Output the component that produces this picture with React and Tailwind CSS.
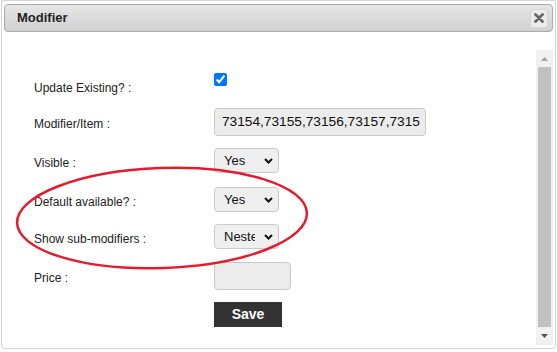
function Select({ value }) {
    return (
        <div className="w-[65px] h-[25px] border border-[#cacaca] rounded-[4px] bg-[#efefef] flex items-center pl-[9px] pr-[5px]">
            <span className="w-[31px] overflow-hidden whitespace-nowrap text-[13px] leading-[16px] text-[#111]">{value}</span>
            <svg className="ml-auto" width="9" height="6" viewBox="0 0 9 6">
                <path d="M1 1 L4.5 4.5 L8 1" fill="none" stroke="#111" strokeWidth="2" />
            </svg>
        </div>
    )
}

function Row({ label, children, className = "" }) {
    return (
        <div className={"flex items-center " + className}>
            <div className="w-[180px] pt-[4px] text-[12px] leading-[14px] text-[#222]">{label}</div>
            {children}
        </div>
    )
}

export default function App() {
    return (
        <div className="relative w-[557px] h-[352px] bg-white overflow-hidden font-['Liberation_Sans',Arial,sans-serif]">
            <div className="ml-[1px] w-[555px] h-[349px] border border-[#d4d4d4] rounded-b-[4px] p-[2px] flex flex-col">
                {/* title bar */}
                <div className="mt-[1px] h-[28px] flex items-center justify-between border border-[#aaaaaa] rounded-[4px] bg-linear-to-b from-[#e6e6e6] to-[#d1d1d1] pl-[12px] pr-[4px]">
                    <span className="text-[13px] font-bold text-[#222]">Modifier</span>
                    <div className="w-[18px] h-[19px] bg-[#ececec] border border-[#d6d6d6] rounded-[3px] flex items-center justify-center">
                        <svg width="10" height="10" viewBox="0 0 10 10">
                            <path d="M1.5 1.5 L8.5 8.5 M8.5 1.5 L1.5 8.5" stroke="#666" strokeWidth="2.8" strokeLinecap="round" />
                        </svg>
                    </div>
                </div>

                {/* body */}
                <div className="flex-1 flex pt-[18px] pb-[1px]">
                    <div className="flex-1 pl-[30px] pt-[23px] flex flex-col">
                        <div className="flex items-start h-[22px]">
                            <div className="w-[180px] pt-[8px] text-[12px] leading-[14px] text-[#222]">Update Existing? :</div>
                            <input type="checkbox" defaultChecked className="w-[13px] h-[13px] m-0" />
                        </div>
                        <Row label="Modifier/Item :" className="mt-[13px]">
                            <div className="w-[212px] h-[28px] border border-[#cacaca] rounded-[4px] bg-[#ececec] pl-[7px] flex items-center overflow-hidden whitespace-nowrap text-[13.7px] text-[#111]">
                                73154,73155,73156,73157,7315
                            </div>
                        </Row>
                        <Row label="Visible :" className="mt-[12px]">
                            <Select value="Yes" />
                        </Row>
                        <Row label="Default available? :" className="mt-[14px]">
                            <Select value="Yes" />
                        </Row>
                        <Row label="Show sub-modifiers :" className="mt-[12px]">
                            <Select value="Nested" />
                        </Row>
                        <Row label="Price :" className="mt-[13px]">
                            <div className="w-[77px] h-[28px] border border-[#cacaca] rounded-[4px] bg-[#ececec]" />
                        </Row>
                        <div className="mt-[12px] ml-[180px] w-[68px] h-[25px] bg-[#333333] text-white text-[14px] font-bold flex items-center justify-center">
                            Save
                        </div>
                    </div>

                    {/* scrollbar */}
                    <div className="w-[17px] bg-[#f1f1f1] flex flex-col">
                        <div className="h-[17px] flex items-center justify-center">
                            <svg width="7" height="4" viewBox="0 0 7 4"><path d="M0 4 L3.5 0 L7 4 Z" fill="#a3a3a3" /></svg>
                        </div>
                        <div className="h-[260px] mx-[2px] bg-[#c1c1c1]" />
                        <div className="flex-1 flex items-center justify-center">
                            <svg width="7" height="4" viewBox="0 0 7 4"><path d="M0 0 L7 0 L3.5 4 Z" fill="#505050" /></svg>
                        </div>
                    </div>
                </div>
            </div>

            {/* annotation */}
            <svg className="absolute left-0 top-0 pointer-events-none" width="557" height="352">
                <ellipse cx="162" cy="218" rx="145" ry="50" fill="none" stroke="#e31b2d" strokeWidth="2.5" transform="rotate(-2 162 218)" />
            </svg>
        </div>
    )
}
